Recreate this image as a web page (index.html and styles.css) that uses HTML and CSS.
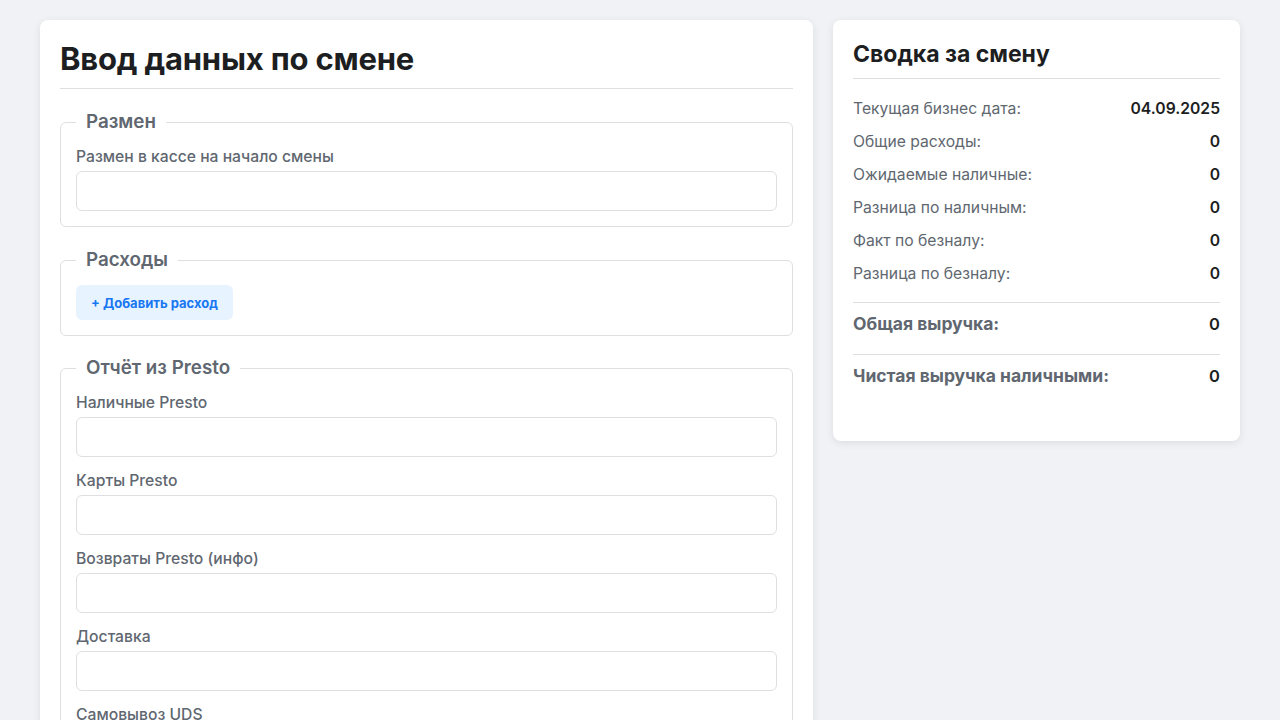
FILE: index.html
```html
<!DOCTYPE html>
<html lang="ru">
<head>
<meta charset="utf-8">
<title>Смена</title>
<link rel="stylesheet" href="styles.css">
</head>
<body>
<div class="layout">
  <main class="card form-card">
    <h1 class="card-title">Ввод данных по смене</h1>

    <fieldset class="group group-first">
      <legend>Размен</legend>
      <div class="field">
        <label>Размен в кассе на начало смены</label>
        <input type="text">
      </div>
    </fieldset>

    <fieldset class="group">
      <legend>Расходы</legend>
      <button class="add-btn" type="button">+ Добавить расход</button>
    </fieldset>

    <fieldset class="group">
      <legend>Отчёт из Presto</legend>
      <div class="field">
        <label>Наличные Presto</label>
        <input type="text">
      </div>
      <div class="field">
        <label>Карты Presto</label>
        <input type="text">
      </div>
      <div class="field">
        <label>Возвраты Presto (инфо)</label>
        <input type="text">
      </div>
      <div class="field">
        <label>Доставка</label>
        <input type="text">
      </div>
      <div class="field">
        <label>Самовывоз UDS</label>
        <input type="text">
      </div>
    </fieldset>
  </main>

  <aside class="card summary-card">
    <h2 class="summary-title">Сводка за смену</h2>
    <div class="rows">
      <div class="row"><span>Текущая бизнес дата:</span><b>04.09.2025</b></div>
      <div class="row"><span>Общие расходы:</span><b>0</b></div>
      <div class="row"><span>Ожидаемые наличные:</span><b>0</b></div>
      <div class="row"><span>Разница по наличным:</span><b>0</b></div>
      <div class="row"><span>Факт по безналу:</span><b>0</b></div>
      <div class="row"><span>Разница по безналу:</span><b>0</b></div>
    </div>
    <div class="total"><span>Общая выручка:</span><b>0</b></div>
    <div class="total"><span>Чистая выручка наличными:</span><b>0</b></div>
  </aside>
</div>
</body>
</html>
```

FILE: styles.css
```css
* { box-sizing: border-box; }

html, body {
  margin: 0;
  padding: 0;
}

body {
  background: #f0f2f5;
  font-family: Inter, "Noto Sans", sans-serif;
  color: #1c1e21;
}

.layout {
  width: 1200px;
  margin: 0 auto;
  padding-top: 20px;
  display: flex;
  align-items: flex-start;
  gap: 20px;
}

.card {
  background: #fff;
  border-radius: 8px;
  box-shadow: 0 2px 8px rgba(0, 0, 0, 0.09);
  padding: 20px;
}

.form-card {
  width: 773px;
  flex: none;
  padding-bottom: 40px;
}

.summary-card {
  flex: 1;
  padding-bottom: 54px;
}

.card-title {
  margin: 0 0 22px;
  font-size: 31px;
  line-height: 38px;
  font-weight: 700;
  padding-bottom: 10px;
  border-bottom: 1px solid #dddfe2;
  letter-spacing: -0.2px;
}

.group {
  margin: 0 0 21px;
  padding: 14px 15px 15px;
  border: 1px solid #dddfe2;
  border-radius: 6px;
}

.group-first {
  margin-bottom: 22px;
}

.group legend {
  padding: 0 10px;
  font-size: 18.8px;
  line-height: 22px;
  font-weight: 600;
  color: #606770;
}

.field {
  margin-bottom: 14px;
}

.field:last-child {
  margin-bottom: 0;
}

.field label {
  display: block;
  font-size: 15.7px;
  line-height: 20px;
  font-weight: 500;
  color: #606770;
  margin-bottom: 4px;
}

.field input {
  display: block;
  width: 100%;
  height: 40px;
  border: 1px solid #dddfe2;
  border-radius: 6px;
  background: #fff;
  font: inherit;
  padding: 0 12px;
}

.add-btn {
  display: block;
  height: 35px;
  padding: 0 15px;
  border: none;
  border-radius: 6px;
  background: #e7f3ff;
  color: #1877f2;
  font-family: Inter, "Noto Sans", sans-serif;
  font-size: 13px;
  font-weight: 700;
}

.summary-title {
  margin: 0 0 19px;
  font-size: 23px;
  line-height: 29px;
  font-weight: 700;
  padding-bottom: 9px;
  border-bottom: 1px solid #dddfe2;
}

.rows {
  display: flex;
  flex-direction: column;
  gap: 12px;
}

.row {
  display: flex;
  justify-content: space-between;
  font-size: 15.7px;
  line-height: 21px;
  color: #606770;
}

.row b {
  color: #1c1e21;
  font-weight: 600;
}

.total {
  display: flex;
  justify-content: space-between;
  margin-top: 18px;
  padding-top: 10px;
  border-top: 1px solid #dddfe2;
  font-size: 17.5px;
  line-height: 22px;
  font-weight: 700;
  color: #606770;
}

.total + .total {
  margin-top: 19px;
}

.total b {
  color: #1c1e21;
  font-size: 16.5px;
  font-weight: 600;
}
```
